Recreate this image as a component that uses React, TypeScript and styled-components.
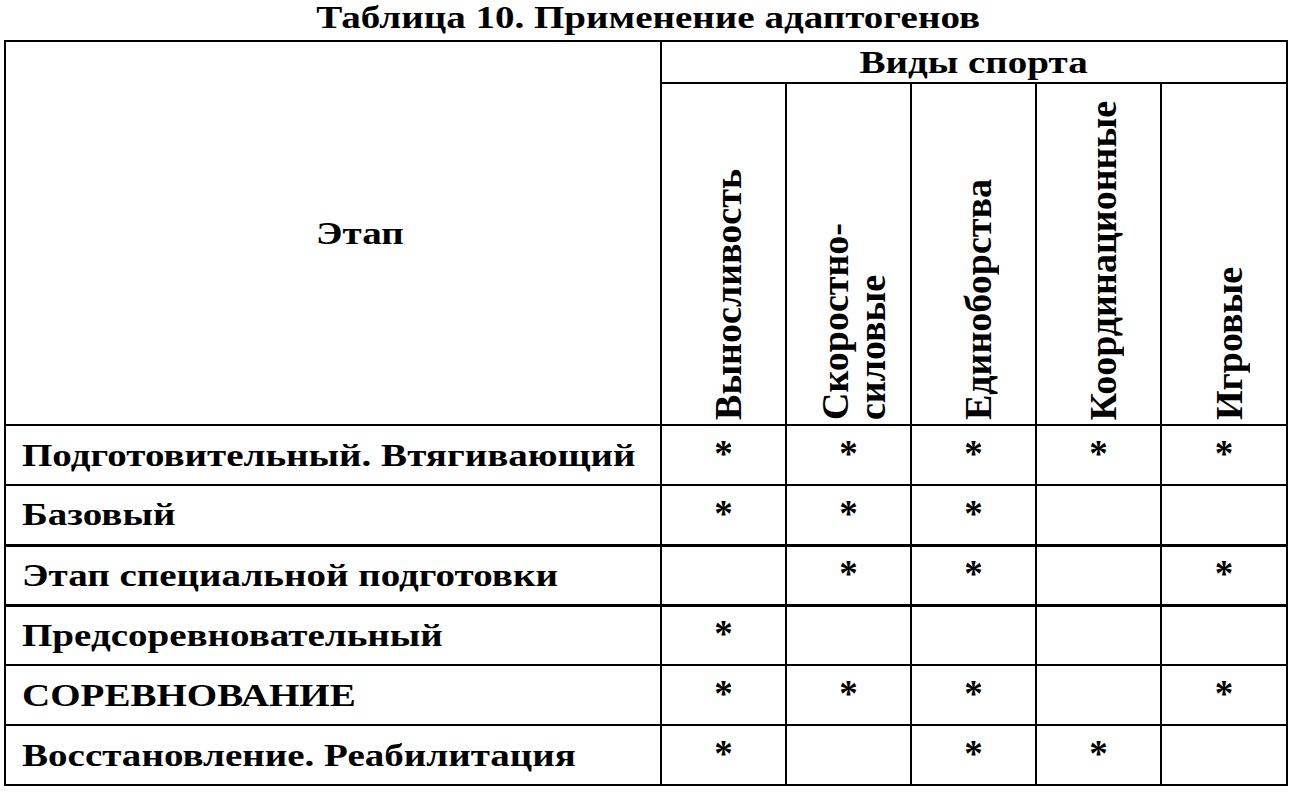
import React from "react";
import styled, { createGlobalStyle } from "styled-components";

const Global = createGlobalStyle`
  html, body { margin: 0; padding: 0; background: #ffffff; }
  body { font-family: "Liberation Serif", "Times New Roman", serif; color: #000; }
`;

const Page = styled.div`
  width: 1297px;
  height: 797px;
  background: #fff;
  display: flex;
  flex-direction: column;
  align-items: stretch;
`;

const Title = styled.h1`
  margin: 0;
  height: 34px;
  padding-bottom: 6px;
  font-family: "Liberation Serif", serif;
  font-weight: 700;
  font-size: 32px;
  line-height: 34px;
  text-align: center;
`;

/* the source print is set wider than it is tall: widen the glyphs */
const Wide = styled.span<{ $origin?: string }>`
  display: inline-block;
  white-space: nowrap;
  transform: scaleX(1.22);
  transform-origin: ${(p) => p.$origin ?? "center"};
`;

const Table = styled.table`
  margin-left: 4px;
  width: 1284px;
  border-collapse: collapse;
  table-layout: fixed;
  font-family: "Liberation Serif", serif;
  font-weight: 700;
`;

const Col = styled.col<{ $w: number }>`
  width: ${(p) => p.$w}px;
`;

const Row = styled.tr`
  height: 60px;
`;

const Cell = styled.td<{ $thick?: boolean }>`
  border: 2px solid #000;
  ${(p) => (p.$thick ? "border-top-width: 3px;" : "")}
  padding: 0;
  vertical-align: middle;
`;

const StageHead = styled.th`
  border: 2px solid #000;
  font-size: 32px;
  font-weight: 700;
  text-align: center;
  padding: 0 0 0 54px;
  vertical-align: middle;
`;

const GroupHead = styled.th`
  border: 2px solid #000;
  height: 40px;
  font-size: 32px;
  font-weight: 700;
  text-align: center;
  padding: 0;
  line-height: 36px;
`;

const SportHead = styled.th`
  border: 2px solid #000;
  height: 340px;
  padding: 0 0 0 10px;
  vertical-align: bottom;
  text-align: center;
`;

const Vertical = styled.div`
  display: inline-block;
  writing-mode: vertical-rl;
  transform: rotate(180deg);
  font-size: 38px;
  font-weight: 700;
  line-height: 37px;
  text-align: left;
  white-space: nowrap;
`;

const Label = styled(Cell)`
  padding-left: 16px;
  font-size: 32px;
  white-space: nowrap;
`;

const Mark = styled(Cell)`
  text-align: center;
  font-size: 37px;
  line-height: 36px;
  padding-bottom: 2px;
`;

const widths = [656, 125, 125, 125, 125, 126];

const sports: string[][] = [
  ["Выносливость"],
  ["Скоростно-", "силовые"],
  ["Единоборства"],
  ["Координационные"],
  ["Игровые"],
];

const rows: { label: string; marks: boolean[]; thick?: boolean }[] = [
  { label: "Подготовительный. Втягивающий", marks: [true, true, true, true, true] },
  { label: "Базовый", marks: [true, true, true, false, false] },
  { label: "Этап специальной подготовки", marks: [false, true, true, false, true], thick: true },
  { label: "Предсоревновательный", marks: [true, false, false, false, false], thick: true },
  { label: "СОРЕВНОВАНИЕ", marks: [true, true, true, false, true] },
  { label: "Восстановление. Реабилитация", marks: [true, false, true, true, false] },
];

export default function App() {
  return (
    <Page>
      <Global />
      <Title>
        <Wide>Таблица 10. Применение адаптогенов</Wide>
      </Title>
      <Table>
        <colgroup>
          {widths.map((w, i) => (
            <Col key={i} $w={w} />
          ))}
        </colgroup>
        <thead>
          <tr>
            <StageHead rowSpan={2}>
              <Wide>Этап</Wide>
            </StageHead>
            <GroupHead colSpan={5}>
              <Wide>Виды спорта</Wide>
            </GroupHead>
          </tr>
          <tr>
            {sports.map((lines, i) => (
              <SportHead key={i}>
                <Vertical>
                  {lines.map((l, j) => (
                    <React.Fragment key={j}>
                      {j > 0 && <br />}
                      {l}
                    </React.Fragment>
                  ))}
                </Vertical>
              </SportHead>
            ))}
          </tr>
        </thead>
        <tbody>
          {rows.map((r, i) => (
            <Row key={i}>
              <Label $thick={r.thick}>
                <Wide $origin="left">{r.label}</Wide>
              </Label>
              {r.marks.map((m, j) => (
                <Mark key={j} $thick={r.thick}>
                  {m ? "*" : ""}
                </Mark>
              ))}
            </Row>
          ))}
        </tbody>
      </Table>
    </Page>
  );
}
